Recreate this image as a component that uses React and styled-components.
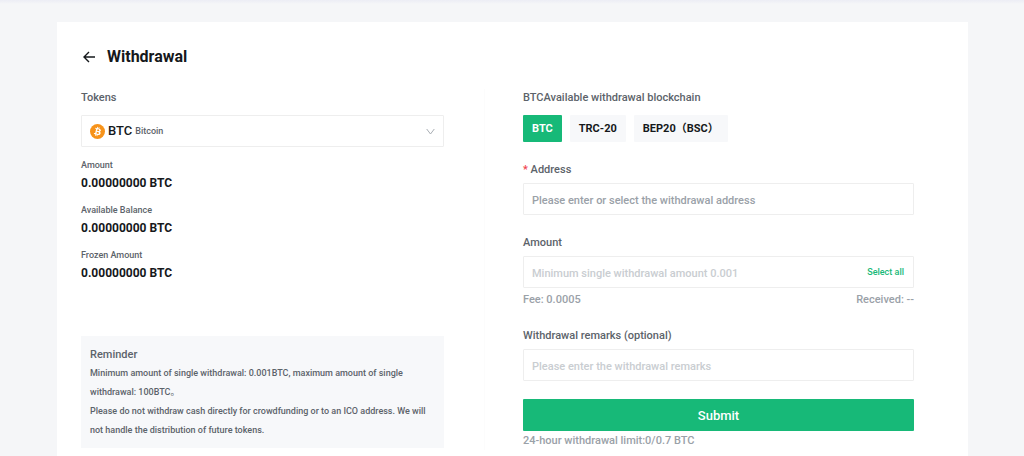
import React, { useState } from 'react';
import styled, { createGlobalStyle } from 'styled-components';

const tokens = [
  { code: 'BTC', name: 'Bitcoin' },
];

const chains = ['BTC', 'TRC-20', 'BEP20（BSC）'];

const balances = [
  { label: 'Amount', value: '0.00000000 BTC' },
  { label: 'Available Balance', value: '0.00000000 BTC' },
  { label: 'Frozen Amount', value: '0.00000000 BTC' },
];

function BitcoinLogo() {
  return (
    <svg width="15" height="15" viewBox="0 0 32 32" aria-hidden="true">
      <circle cx="16" cy="16" r="16" fill="#f7931a" />
      <path
        fill="#fff"
        d="M23.2 14c.3-2.1-1.3-3.2-3.5-4l.7-2.9-1.7-.4-.7 2.8-1.4-.3.7-2.8-1.7-.4-.8 2.8-3.5-.9-.5 1.900 1.300.3c.7.2.8.6.8 1l-1.900 7.900c-.1.2-.3.5-.8.4l-1.300-.3-.8 2 3.300.9-.7 2.900 1.700.4.7-2.900 1.400.4-.7 2.800 1.700.4.7-2.800c3 .5 5.200.3 6.100-2.400.8-2.100 0-3.400-1.500-4.200 1.100-.3 2-1 2.400-2.600zm-4 5.600c-.5 2.200-4.200 1-5.400.7l1-3.900c1.200.3 5 .9 4.400 3.200zm.6-5.600c-.5 1.900-3.600.9-4.600.700l.8-3.600c1 .3 4.300.7 3.800 2.900z"
      />
    </svg>
  );
}

function Withdrawal() {
  const [chain, setChain] = useState(chains[0]);
  const [code, setCode] = useState('BTC');
  const token = tokens.find((item) => item.code === code);

  return (
    <Page>
      <Card>
        <Header>
          <BackButton type="button" aria-label="Back">
            <svg width="12" height="12" viewBox="0 0 12 12" fill="none" stroke="currentColor" strokeWidth="1.4">
              <path d="M6 1L1 6l5 5M1 6h11" />
            </svg>
          </BackButton>
          <Title>Withdrawal</Title>
        </Header>

        <Columns>
          <LeftPane>
            <Label htmlFor="token">Tokens</Label>
            <TokenBox>
              <BitcoinLogo />
              <TokenCode>{token.code}</TokenCode>
              <TokenName>{token.name}</TokenName>
              <Chevron width="9" height="7" viewBox="0 0 9 7" fill="none" stroke="#a8adb3" aria-hidden="true">
                <path d="M.7 1l3.800 5L8.300 1" />
              </Chevron>
              <TokenSelect id="token" value={code} onChange={(e) => setCode(e.target.value)}>
                {tokens.map((item) => (
                  <option key={item.code} value={item.code}>{item.code}</option>
                ))}
              </TokenSelect>
            </TokenBox>

            <Balances>
              {balances.map((item) => (
                <div key={item.label}>
                  <BalanceLabel>{item.label}</BalanceLabel>
                  <BalanceValue>{item.value}</BalanceValue>
                </div>
              ))}
            </Balances>

            <Reminder>
              <ReminderTitle>Reminder</ReminderTitle>
              <ReminderText>
                Minimum amount of single withdrawal: 0.001BTC, maximum amount of single withdrawal: 100BTC。
              </ReminderText>
              <ReminderText>
                Please do not withdraw cash directly for crowdfunding or to an ICO address. We will not handle the
                distribution of future tokens.
              </ReminderText>
            </Reminder>
          </LeftPane>

          <RightPane onSubmit={(e) => e.preventDefault()}>
            <Label as="div" id="chain-label">BTCAvailable withdrawal blockchain</Label>
            <ChainList role="group" aria-labelledby="chain-label">
              {chains.map((item) => (
                <ChainButton
                  key={item}
                  type="button"
                  $active={item === chain}
                  aria-pressed={item === chain}
                  onClick={() => setChain(item)}
                >
                  {item}
                </ChainButton>
              ))}
            </ChainList>

            <Field>
              <FieldLabel htmlFor="address"><Required>*</Required> Address</FieldLabel>
              <InputBox>
                <Input id="address" $hint="#9aa1a8" placeholder="Please enter or select the withdrawal address" />
              </InputBox>
            </Field>

            <Field>
              <FieldLabel htmlFor="amount">Amount</FieldLabel>
              <InputBox>
                <Input id="amount" placeholder="Minimum single withdrawal amount 0.001" />
                <SelectAll type="button">Select all</SelectAll>
              </InputBox>
              <Summary>
                <span>Fee: 0.0005</span>
                <span>Received: --</span>
              </Summary>
            </Field>

            <Field>
              <FieldLabel htmlFor="remarks">Withdrawal remarks (optional)</FieldLabel>
              <InputBox>
                <Input id="remarks" placeholder="Please enter the withdrawal remarks" />
              </InputBox>
            </Field>

            <Submit type="submit">Submit</Submit>
            <Limit>24-hour withdrawal limit:0/0.7 BTC</Limit>
          </RightPane>
        </Columns>
      </Card>
    </Page>
  );
}

const GlobalStyle = createGlobalStyle`
  * {
    box-sizing: border-box;
  }

  body {
    margin: 0;
    background: #f5f6f8;
    color: #15181b;
    font-family: Roboto, "Noto Sans CJK SC", sans-serif;
    font-size: 11px;
    font-weight: 500;
    line-height: 18px;
  }

  button, input, select {
    font: inherit;
  }

  h1, h2, p, dl, dt, dd {
    margin: 0;
  }
`;

const Page = styled.main`
  display: flex;
  min-height: 100vh;
  padding: 22px 56px 0 57px;
  background: linear-gradient(#ecedf5, #f5f6f8 4px);
`;

const Card = styled.section`
  flex: 1;
  min-width: 0;
  padding: 23px 54px 0 24px;
  background: #fff;
`;

const Header = styled.header`
  display: flex;
  align-items: center;
  gap: 10px;
  margin-bottom: 20px;
`;

const BackButton = styled.button`
  display: flex;
  align-items: center;
  justify-content: center;
  width: 16px;
  height: 16px;
  padding: 0;
  border: 0;
  background: none;
  color: #15181b;
  cursor: pointer;
`;

const Title = styled.h1`
  font-size: 16px;
  font-weight: 700;
  line-height: 24px;
`;

const Columns = styled.div`
  display: grid;
  grid-template-columns: 404fr 429fr;
`;

const LeftPane = styled.div`
  padding-right: 40px;
  border-right: 1px solid #fcfcfc;
`;

const RightPane = styled.form`
  padding-left: 38px;
`;

const Label = styled.label`
  display: block;
  margin-bottom: 8px;
  color: #5c636a;
`;

const TokenBox = styled.div`
  position: relative;
  display: flex;
  align-items: center;
  height: 32px;
  padding: 0 8px;
  border: 1px solid #eee;
  border-radius: 1px;
`;

const TokenCode = styled.span`
  margin: 0 3px;
  font-size: 13px;
`;

const TokenName = styled.span`
  color: #5c636a;
  font-size: 9px;
`;

const Chevron = styled.svg`
  margin-left: auto;
`;

// transparent native control over the styled value
const TokenSelect = styled.select`
  position: absolute;
  inset: 0;
  width: 100%;
  opacity: 0;
  cursor: pointer;
`;

const Balances = styled.dl`
  display: grid;
  gap: 9px;
  margin-top: 10px;
`;

const BalanceLabel = styled.dt`
  color: #5c636a;
  font-size: 9px;
  line-height: 16px;
`;

const BalanceValue = styled.dd`
  font-size: 12px;
  font-weight: 700;
  line-height: 20px;
`;

const Reminder = styled.section`
  margin-top: 53px;
  padding: 10px 9px 8px;
  background: #f7f8fa;
  color: #5c636a;
`;

const ReminderTitle = styled.h2`
  font-size: 11px;
  font-weight: 500;
`;

const ReminderText = styled.p`
  font-size: 9px;
  line-height: 19px;
`;

const ChainList = styled.div`
  display: flex;
  gap: 8px;
`;

const ChainButton = styled.button`
  height: 27px;
  padding: 0 9px;
  border: 0;
  border-radius: 1px;
  background: ${(props) => (props.$active ? '#17b978' : '#f7f8fa')};
  color: ${(props) => (props.$active ? '#fff' : '#15181b')};
  font-weight: 700;
  cursor: pointer;
`;

const Field = styled.div`
  margin-top: 19px;
`;

const FieldLabel = styled(Label)`
  margin-bottom: 4px;
`;

const Required = styled.span`
  color: #f0414f;
`;

const InputBox = styled.div`
  display: flex;
  align-items: center;
  height: 32px;
  padding: 0 9px 0 8px;
  border: 1px solid #eee;
  border-radius: 1px;
`;

const Input = styled.input`
  flex: 1;
  min-width: 0;
  height: 30px;
  padding: 2px 0 0;
  border: 0;
  outline: 0;
  background: none;
  color: #15181b;

  &::placeholder {
    color: ${(props) => props.$hint || '#c9cdd1'};
    opacity: 1;
  }
`;

const SelectAll = styled.button`
  padding: 0;
  border: 0;
  background: none;
  color: #17b978;
  font-size: 9px;
  cursor: pointer;
`;

const Summary = styled.div`
  display: flex;
  justify-content: space-between;
  margin-top: 4px;
  color: #9aa1a8;
  line-height: 16px;
`;

const Submit = styled.button`
  display: block;
  width: 100%;
  height: 32px;
  margin-top: 18px;
  padding: 2px 0 0;
  border: 0;
  border-radius: 1px;
  background: #17b978;
  color: #fff;
  font-size: 13px;
  cursor: pointer;
`;

const Limit = styled.p`
  margin-top: 1px;
  color: #9aa1a8;
`;

function App() {
  return (
    <>
      <GlobalStyle />
      <Withdrawal />
    </>
  );
}

export default App;
